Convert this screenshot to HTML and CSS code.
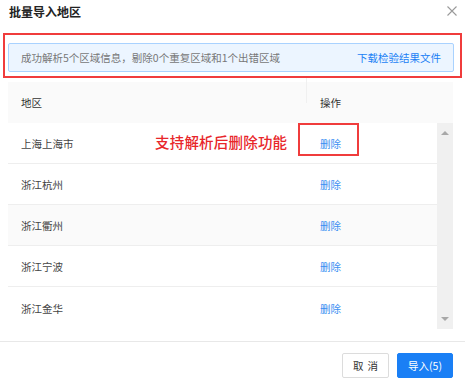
FILE: index.html
```html
<!DOCTYPE html>
<html lang="zh-CN">
<head>
    <meta charset="UTF-8">
    <title>批量导入地区</title>
    <link rel="stylesheet" href="styles.css">
</head>
<body>
    <div class="dialog">
        <div class="dialog-header">
            <span class="dialog-title">批量导入地区</span>
            <svg class="close" width="10" height="10" viewBox="0 0 10 10">
                <path d="M0.5 0.5 L9.5 9.5 M9.5 0.5 L0.5 9.5" stroke="#9a9a9a" stroke-width="1.1" fill="none"/>
            </svg>
        </div>

        <div class="mark-box">
            <div class="alert">
                <span class="alert-text">成功解析5个区域信息，剔除0个重复区域和1个出错区域</span>
                <a href="#" class="alert-link">下载检验结果文件</a>
            </div>
        </div>

        <div class="table">
            <div class="thead">
                <div class="cell col-region">地区</div>
                <div class="cell col-action">操作</div>
            </div>
            <div class="tbody-wrap">
                <div class="tbody">
                    <div class="row first-row">
                        <div class="cell col-region">上海上海市</div>
                        <div class="cell col-action"><a href="#" class="del">删除</a></div>
                        <span class="note">支持解析后删除功能</span>
                        <span class="note-box"></span>
                    </div>
                    <div class="row">
                        <div class="cell col-region">浙江杭州</div>
                        <div class="cell col-action"><a href="#" class="del">删除</a></div>
                    </div>
                    <div class="row striped">
                        <div class="cell col-region">浙江衢州</div>
                        <div class="cell col-action"><a href="#" class="del">删除</a></div>
                    </div>
                    <div class="row">
                        <div class="cell col-region">浙江宁波</div>
                        <div class="cell col-action"><a href="#" class="del">删除</a></div>
                    </div>
                    <div class="row last-row">
                        <div class="cell col-region">浙江金华</div>
                        <div class="cell col-action"><a href="#" class="del">删除</a></div>
                    </div>
                </div>
                <div class="scrollbar">
                    <span class="arrow-up"></span>
                    <span class="arrow-down"></span>
                </div>
            </div>
        </div>

        <div class="dialog-footer">
            <button class="btn btn-default">取消</button>
            <button class="btn btn-primary">导入(5)</button>
        </div>
    </div>
</body>
</html>
```

FILE: styles.css
```css
* {
    margin: 0;
    padding: 0;
    box-sizing: border-box;
    font-family: "Noto Sans CJK SC", "Noto Sans", sans-serif;
}

body {
    background: #ffffff;
}

.dialog {
    width: 465px;
    height: 383px;
    background: #ffffff;
}

/* Header */
.dialog-header {
    height: 33px;
    padding: 0 8px 0 9px;
    display: flex;
    justify-content: space-between;
    align-items: flex-start;
}

.dialog-title {
    font-size: 12px;
    font-weight: bold;
    color: #222;
    line-height: 24px;
}

.close {
    margin-top: 6px;
}

/* Alert with red annotation frame */
.mark-box {
    margin: 0 3px;
    border: 2px solid #f03c3c;
    padding: 8px 6px 4px 3px;
}

.alert {
    height: 29px;
    background: #ecf5ff;
    border: 1px solid #a9d2ff;
    border-radius: 2px;
    padding: 0 12px 0 12px;
    display: flex;
    justify-content: space-between;
    align-items: center;
    font-size: 10.5px;
}

.alert-text {
    color: #777;
}

.alert-link {
    color: #1a7ff5;
    text-decoration: none;
}

/* Table */
.table {
    margin: 4px 12px 0 8px;
    font-size: 10.5px;
}

.thead {
    height: 41px;
    background: #fafafa;
    display: flex;
    align-items: center;
    color: #333;
}

.thead .col-region {
    position: relative;
}

.thead .col-region::after {
    content: "";
    position: absolute;
    right: 0;
    top: -17px;
    width: 1px;
    height: 25px;
    background: #f0f0f0;
}

.cell.col-region {
    width: 299px;
    padding-left: 13px;
}

.cell.col-action {
    padding-left: 13px;
}

.tbody-wrap {
    display: flex;
    height: 206px;
}

.tbody {
    flex: 1;
}

.row {
    position: relative;
    height: 41px;
    display: flex;
    align-items: center;
    border-bottom: 1px solid #eeeeee;
    color: #444;
}

.row.last-row {
    height: 42px;
    border-bottom: none;
}

.row.striped {
    background: #fafafa;
}

.del {
    color: #3a8ef2;
    text-decoration: none;
}

/* Annotations */
.note {
    position: absolute;
    left: 147px;
    top: 8px;
    font-size: 14.5px;
    font-weight: 500;
    color: #e8262a;
    letter-spacing: 0.2px;
}

.note-box {
    position: absolute;
    left: 290px;
    top: 0;
    width: 61px;
    height: 33px;
    border: 2px solid #f03c3c;
}

/* Scrollbar */
.scrollbar {
    position: relative;
    width: 16px;
    background: #f0f0f0;
}

.arrow-up,
.arrow-down {
    position: absolute;
    left: 4px;
    width: 0;
    height: 0;
    border-left: 4px solid transparent;
    border-right: 4px solid transparent;
}

.arrow-up {
    top: 8px;
    border-bottom: 4px solid #a8a8a8;
}

.arrow-down {
    bottom: 8px;
    border-top: 4px solid #a8a8a8;
}

/* Footer */
.dialog-footer {
    margin-top: 12px;
    border-top: 1px solid #e8e8e8;
    padding: 11px 12px 0 0;
    display: flex;
    justify-content: flex-end;
    gap: 8px;
}

.btn {
    height: 25px;
    border-radius: 2px;
    font-size: 10.5px;
    cursor: pointer;
}

.btn-default {
    width: 47px;
    background: #ffffff;
    border: 1px solid #dcdcdc;
    color: #333;
    letter-spacing: 4px;
    text-indent: 4px;
}

.btn-primary {
    width: 56px;
    background: #1a7ff5;
    border: 1px solid #1a7ff5;
    color: #ffffff;
}
```
